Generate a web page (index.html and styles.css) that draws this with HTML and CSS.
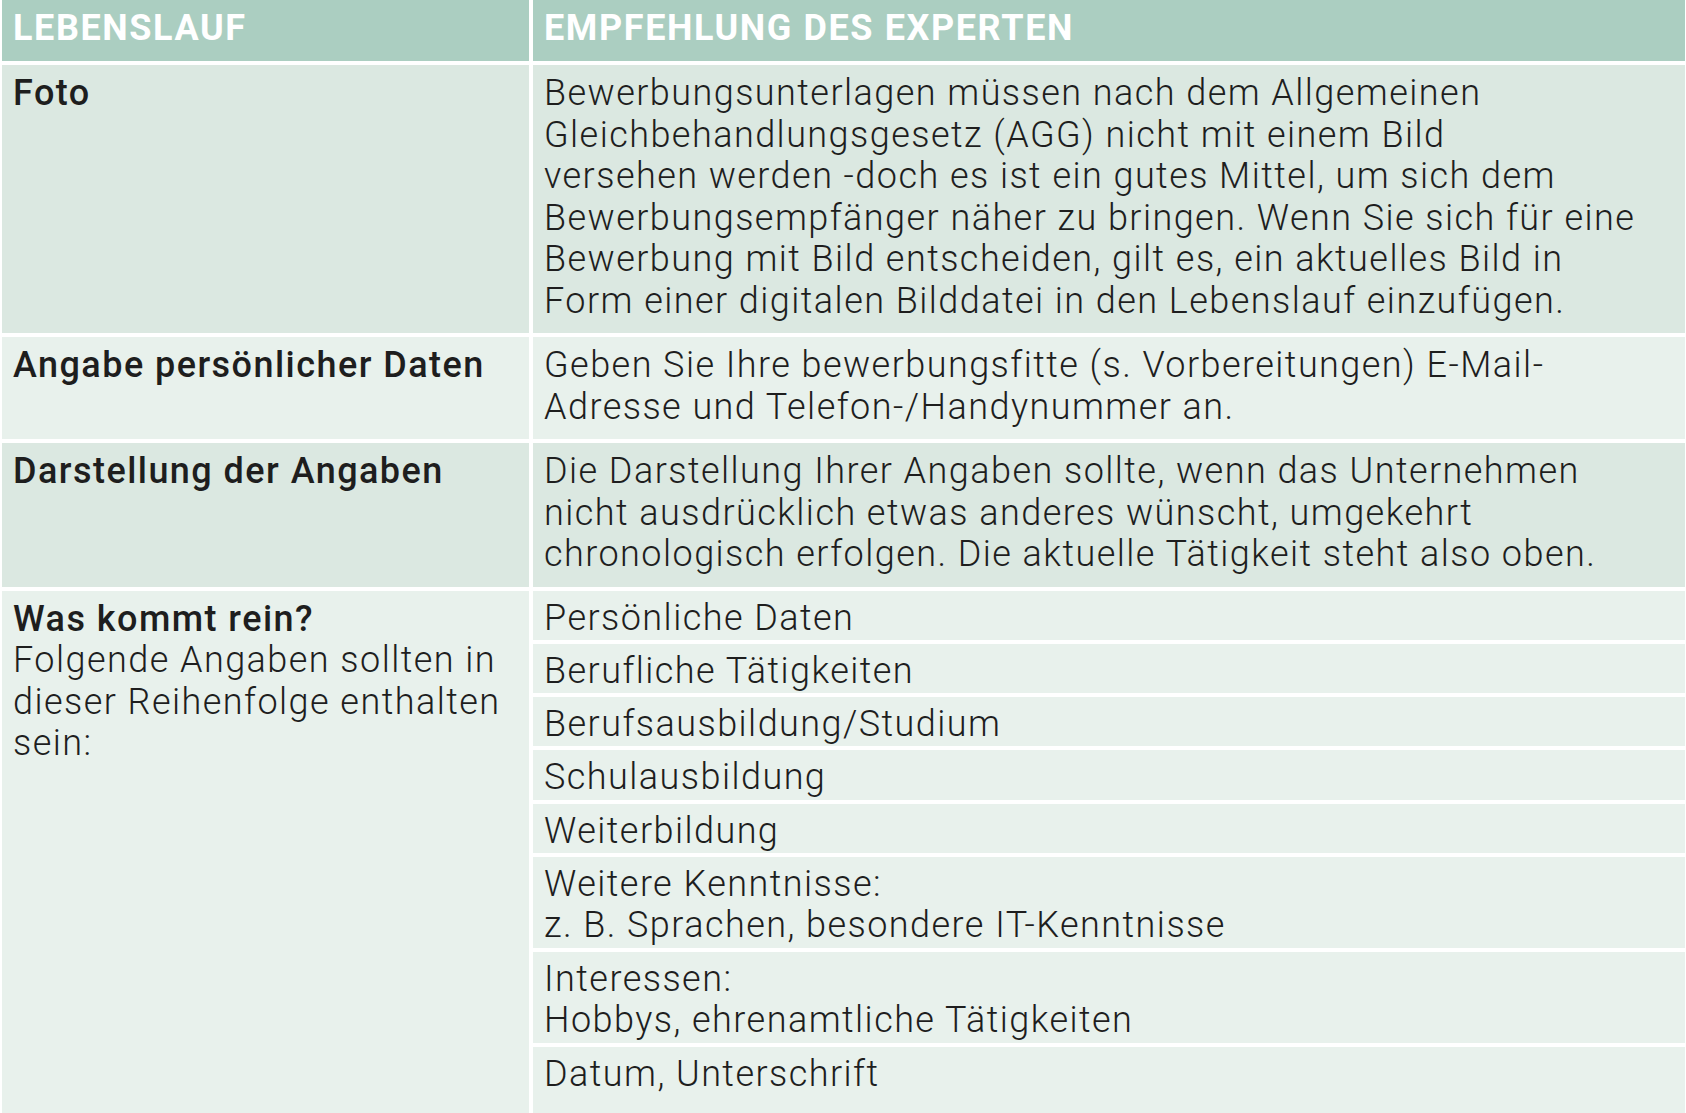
FILE: index.html
```html
<!DOCTYPE html>
<html lang="de">
<head>
<meta charset="utf-8">
<title>Lebenslauf – Empfehlung des Experten</title>
<link rel="stylesheet" href="styles.css">
</head>
<body>
<div class="table">
  <div class="head">LEBENSLAUF</div>
  <div class="head">EMPFEHLUNG DES EXPERTEN</div>

  <div class="cell label dark">Foto</div>
  <div class="cell dark">Bewerbungsunterlagen müssen nach dem Allgemeinen<br>Gleichbehandlungsgesetz (AGG) nicht mit einem Bild<br>versehen werden -doch es ist ein gutes Mittel, um sich dem<br>Bewerbungsempfänger näher zu bringen. Wenn Sie sich für eine<br>Bewerbung mit Bild entscheiden, gilt es, ein aktuelles Bild in<br>Form einer digitalen Bilddatei in den Lebenslauf einzufügen.</div>

  <div class="cell label light">Angabe persönlicher Daten</div>
  <div class="cell light">Geben Sie Ihre bewerbungsfitte (s. Vorbereitungen) E-Mail-<br>Adresse und Telefon-/Handynummer an.</div>

  <div class="cell label dark">Darstellung der Angaben</div>
  <div class="cell dark">Die Darstellung Ihrer Angaben sollte, wenn das Unternehmen<br>nicht ausdrücklich etwas anderes wünscht, umgekehrt<br>chronologisch erfolgen. Die aktuelle Tätigkeit steht also oben.</div>

  <div class="cell light"><span class="label">Was kommt rein?</span><br>Folgende Angaben sollten in<br>dieser Reihenfolge enthalten<br>sein:</div>
  <div class="sublist">
    <div class="sub">Persönliche Daten</div>
    <div class="sub">Berufliche Tätigkeiten</div>
    <div class="sub">Berufsausbildung/Studium</div>
    <div class="sub">Schulausbildung</div>
    <div class="sub">Weiterbildung</div>
    <div class="sub">Weitere Kenntnisse:<br>z. B. Sprachen, besondere IT-Kenntnisse</div>
    <div class="sub">Interessen:<br>Hobbys, ehrenamtliche Tätigkeiten</div>
    <div class="sub last">Datum, Unterschrift</div>
  </div>
</div>
</body>
</html>
```

FILE: styles.css
```css
html, body {
  margin: 0;
  padding: 0;
  background: #ffffff;
  overflow: hidden;
}

body {
  font-family: Roboto, "Liberation Sans", sans-serif;
  color: #1e1e1e;
}

.table {
  display: grid;
  grid-template-columns: 527px 1152px;
  gap: 4px;
  padding: 0 1px 0 2px;
  width: 1683px;
}

.head {
  background: #abcec1;
  color: #ffffff;
  font-weight: 700;
  font-size: 36px;
  letter-spacing: 1.6px;
  line-height: 41.5px;
  height: 61px;
  box-sizing: border-box;
  padding: 8px 11px 0 11px;
  white-space: nowrap;
}

.cell {
  font-size: 36px;
  font-weight: 300;
  letter-spacing: 1.45px;
  line-height: 41.5px;
  padding: 8px 11px 11px 11px;
  white-space: nowrap;
}

.label {
  font-weight: 500;
}

.dark {
  background: #dbe8e1;
}

.light {
  background: #e8f1ec;
}

.sublist {
  display: flex;
  flex-direction: column;
  gap: 4px;
}

.sub {
  background: #e8f1ec;
  font-size: 36px;
  font-weight: 300;
  letter-spacing: 1.45px;
  line-height: 41.5px;
  padding: 7px 11px 0.8px 11px;
  white-space: nowrap;
}

.sub.last {
  padding-bottom: 17.5px;
}
```
